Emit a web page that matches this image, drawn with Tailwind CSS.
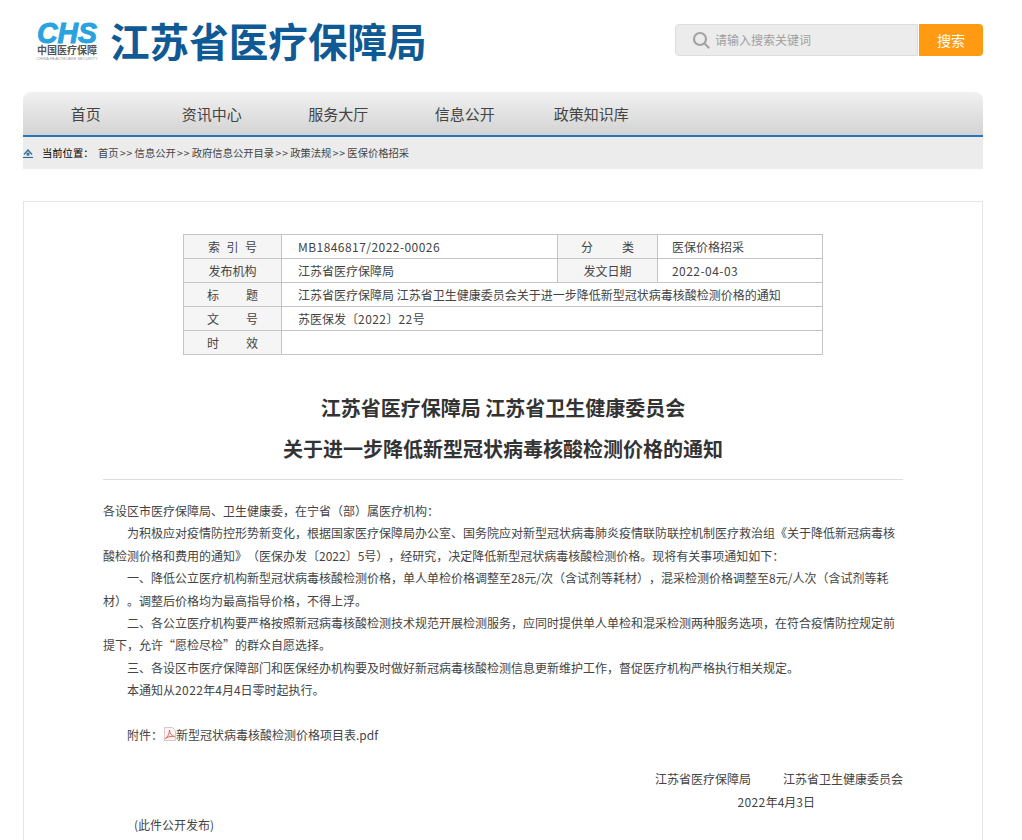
<!DOCTYPE html>
<html lang="zh-CN">
<head>
    <meta charset="UTF-8">
    <title>江苏省医疗保障局</title>
    <script src="https://cdn.jsdelivr.net/npm/@tailwindcss/browser@4"></script>
</head>
<body class="bg-white text-[#333] text-xs font-['Noto_Sans_CJK_SC','Noto_Sans',sans-serif] [text-spacing-trim:space-all] overflow-hidden">
<div class="w-[960px] ml-[23px] h-[840px] overflow-hidden">
    <!-- header -->
    <header class="h-[92px] flex justify-between pt-[20px]">
        <div class="flex items-start pl-[14px]">
            <div class="w-[60px] flex flex-col items-center">
                <svg class="mt-[2px] w-[60px] h-[21px] overflow-visible" viewBox="0 0 60 21"><text x="0" y="21" textLength="60" lengthAdjust="spacingAndGlyphs" font-family="Liberation Sans" font-weight="bold" font-style="italic" font-size="29" fill="#29a3e0" stroke="#29a3e0" stroke-width="1">CHS</text></svg>
                <span class="mt-[1px] text-[10px] leading-[12px] text-[#555] font-bold whitespace-nowrap">中国医疗保障</span>
                <span class="font-['Liberation_Sans',sans-serif] text-[4px] leading-[5px] text-[#999] whitespace-nowrap">CHINA HEALTHCARE SECURITY</span>
            </div>
            <h1 class="ml-[13px] text-[39.6px] leading-[40px] font-bold text-[#0f5a94] whitespace-nowrap">江苏省医疗保障局</h1>
        </div>
        <div class="flex h-[32px] mt-[4px] gap-px">
            <div class="w-[243px] bg-[#ececec] border border-[#ddd] rounded-l-[4px] flex items-center pl-[16px]">
                <svg class="w-[18px] h-[18px] text-[#a3a3a3]" viewBox="0 0 18 18" fill="none" stroke="currentColor" stroke-width="2.2"><circle cx="8" cy="8" r="6"/><path d="M12.5 12.500l4 4" stroke-linecap="round"/></svg>
                <span class="ml-[5px] text-[#a0a0a0]">请输入搜索关键词</span>
            </div>
            <button class="w-[64px] bg-[#ff9a12] text-white text-sm rounded-r-[4px]">搜索</button>
        </div>
    </header>

    <!-- nav -->
    <nav class="h-[45px] flex rounded-t-lg border-b-2 border-[#2a75b8] bg-linear-to-b from-[#f1f1f1] to-[#d3d3d3] text-[15px] text-[#444]">
        <a class="w-[125.5px] text-center leading-[43px]">首页</a>
        <a class="w-[126.5px] text-center leading-[43px]">资讯中心</a>
        <a class="w-[126.5px] text-center leading-[43px]">服务大厅</a>
        <a class="w-[126.5px] text-center leading-[43px]">信息公开</a>
        <a class="w-[126.5px] text-center leading-[43px]">政策知识库</a>
    </nav>

    <!-- breadcrumb -->
    <div class="h-[32px] bg-[#ececec] flex items-center text-[10.3px] text-[#444]">
        <svg class="w-[10px] h-[9px] text-[#2f6796]" viewBox="0 0 10 9" fill="none" stroke="currentColor" stroke-width="1.2"><path d="M1 5.500L5 1l4 4.500"/><circle cx="5" cy="5.200" r="1"/><path d="M0 8.500h10"/></svg>
        <span class="ml-[9px] w-[56px] text-black">当前位置：</span>
        <span>首页</span>
        <span class="w-[16px] text-center tracking-[1px]">&gt;&gt;</span>
        <span>信息公开</span>
        <span class="w-[16px] text-center tracking-[1px]">&gt;&gt;</span>
        <span>政府信息公开目录</span>
        <span class="w-[16px] text-center tracking-[1px]">&gt;&gt;</span>
        <span>政策法规</span>
        <span class="w-[16px] text-center tracking-[1px]">&gt;&gt;</span>
        <span>医保价格招采</span>
    </div>

    <!-- content -->
    <main class="mt-[32px] h-[700px] border border-[#e5e5e5] pt-[32px]">
        <table class="ml-[159px] w-[640px] table-fixed border-collapse border border-[#c4c4c4] text-[#444]">
            <tr class="h-[24px]">
                <td class="w-[98px] border border-[#c4c4c4] bg-[#f5f5f5] px-[24px]"><div class="flex justify-between"><span>索</span><span>引</span><span>号</span></div></td>
                <td class="w-[276px] border border-[#c4c4c4] pl-[16px] tracking-[0.45px]">MB1846817/2022-00026</td>
                <td class="w-[100px] border border-[#c4c4c4] bg-[#f5f5f5] px-[23px]"><div class="flex justify-between"><span>分</span><span>类</span></div></td>
                <td class="border border-[#c4c4c4] pl-[14px]">医保价格招采</td>
            </tr>
            <tr class="h-[24px]">
                <td class="border border-[#c4c4c4] bg-[#f5f5f5] text-center">发布机构</td>
                <td class="border border-[#c4c4c4] pl-[16px]">江苏省医疗保障局</td>
                <td class="border border-[#c4c4c4] bg-[#f5f5f5] text-center">发文日期</td>
                <td class="border border-[#c4c4c4] pl-[14px] tracking-[0.45px]">2022-04-03</td>
            </tr>
            <tr class="h-[24px]">
                <td class="border border-[#c4c4c4] bg-[#f5f5f5] px-[23px]"><div class="flex justify-between"><span>标</span><span>题</span></div></td>
                <td colspan="3" class="border border-[#c4c4c4] pl-[16px]">江苏省医疗保障局 江苏省卫生健康委员会关于进一步降低新型冠状病毒核酸检测价格的通知</td>
            </tr>
            <tr class="h-[24px]">
                <td class="border border-[#c4c4c4] bg-[#f5f5f5] px-[23px]"><div class="flex justify-between"><span>文</span><span>号</span></div></td>
                <td colspan="3" class="border border-[#c4c4c4] pl-[16px]">苏医保发〔<span class="tracking-[0.45px]">2022</span>〕<span class="tracking-[0.45px]">22</span>号</td>
            </tr>
            <tr class="h-[24px]">
                <td class="border border-[#c4c4c4] bg-[#f5f5f5] px-[23px]"><div class="flex justify-between"><span>时</span><span>效</span></div></td>
                <td colspan="3" class="border border-[#c4c4c4] pl-[16px]"></td>
            </tr>
        </table>

        <div class="mx-[79px] mt-[32px] pb-[10px] border-b border-[#ddd] text-center text-xl font-bold leading-[41px] text-[#333]">
            <p>江苏省医疗保障局 江苏省卫生健康委员会</p>
            <p>关于进一步降低新型冠状病毒核酸检测价格的通知</p>
        </div>

        <div class="mx-[79px] mt-[20px] leading-[22.4px] text-[#444]">
            <p>各设区市医疗保障局、卫生健康委，在宁省（部）属医疗机构：</p>
            <p class="indent-[24px]">为积极应对疫情防控形势新变化，根据国家医疗保障局办公室、国务院应对新型冠状病毒肺炎疫情联防联控机制医疗救治组《关于降低新冠病毒核酸检测价格和费用的通知》（医保办发〔2022〕5号），经研究，决定降低新型冠状病毒核酸检测价格。现将有关事项通知如下：</p>
            <p class="indent-[24px]">一、降低公立医疗机构新型冠状病毒核酸检测价格，单人单检价格调整至28元/次（含试剂等耗材），混采检测价格调整至8元/人次（含试剂等耗材）。调整后价格均为最高指导价格，不得上浮。</p>
            <p class="indent-[24px]">二、各公立医疗机构要严格按照新冠病毒核酸检测技术规范开展检测服务，应同时提供单人单检和混采检测两种服务选项，在符合疫情防控规定前提下，允许“愿检尽检”的群众自愿选择。</p>
            <p class="indent-[24px]">三、各设区市医疗保障部门和医保经办机构要及时做好新冠病毒核酸检测信息更新维护工作，督促医疗机构严格执行相关规定。</p>
            <p class="indent-[24px]">本通知从<span class="tracking-[0.4px]">2022</span>年4月4日零时起执行。</p>
            <p class="pl-[24px] mt-[22.4px] flex items-center">
                <span class="w-[37px]">附件：</span>
                <svg class="w-[12px] h-[14px] -mt-[3px]" viewBox="0 0 12 14" fill="none"><path d="M0.5 0.500h8l3 3v10h-11z" fill="#f8f4f4" stroke="#d5c8c8"/><path d="M1.500 11.500C4 10 5.500 6 5.500 3c0 3 2 6 5 6.500C8 9 4 9.500 1.500 11.500z" stroke="#e0564c" stroke-width="0.9"/></svg>
                <span>新型冠状病毒核酸检测价格项目表.pdf</span>
            </p>
            <p class="mt-[21.4px] text-right">江苏省医疗保障局<span class="ml-[32px]">江苏省卫生健康委员会</span></p>
            <p class="mt-[1px] pr-[88px] text-right"><span class="tracking-[0.4px]">2022</span>年4月3日</p>
            <p class="pl-[31px]">(此件公开发布)</p>
        </div>
    </main>
</div>
</body>
</html>
